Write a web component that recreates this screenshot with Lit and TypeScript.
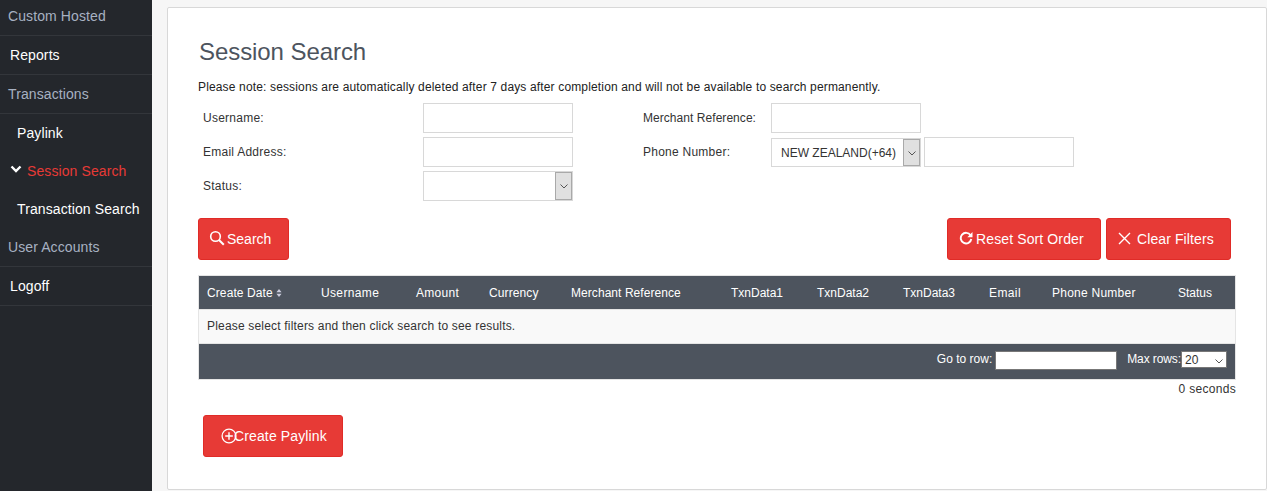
import { LitElement, html, css, svg } from "lit";
import { customElement } from "lit/decorators.js";

const chevron = svg`<path d="M1.5 3.5L5 7l3.5-3.5" fill="none" stroke="#555" stroke-width="1"/>`;

const COLUMNS: [string, number, number][] = [
  ["Create Date", 114, 0.1], ["Username", 95, 0.35], ["Amount", 73, 0.3], ["Currency", 82, 0.1],
  ["Merchant Reference", 160, 0.06], ["TxnData1", 86, 0], ["TxnData2", 86, 0], ["TxnData3", 86, 0],
  ["Email", 63, 0.4], ["Phone Number", 126, 0.25], ["Status", 65, 0],
];

@customElement("app-root")
export class AppRoot extends LitElement {
  static styles = css`
    :host { display: flex; width: 100%; height: 491px; overflow: hidden; background: #f6f6f6;
      font-family: "Liberation Sans", Arial, sans-serif; font-size: 12px; color: #333; }
    * { box-sizing: border-box; }
    .side { width: 152px; flex: none; background: #24272c; font-size: 14px; color: #fff; letter-spacing: 0.1px; }
    .item { height: 39px; display: flex; align-items: center; padding: 0 0 0 10px; border-bottom: 1px solid #33363b; white-space: nowrap; }
    .item.first { height: 36px; padding: 0 0 3px 8px; }
    .item.muted { color: #a7b1c2; padding-left: 8px; }
    .item.sub { height: 38px; border-bottom: 0; padding-left: 17px; }
    .item.sub.active { color: #e73a36; padding-left: 10px; gap: 5px; }
    .item.sub.active svg { margin-top: -5px; }
    .item.accounts { height: 39px; padding-bottom: 1px; }
    main { flex: 1; min-width: 0; padding: 7px 0 1px 15px; display: flex; }
    .card { flex: 1; min-width: 0; background: #fff; border: 1px solid #d8d8d8; border-radius: 2px; padding: 30px 30px 0; }
    h1 { margin: 0 0 0 1px; font-size: 24px; font-weight: 400; line-height: 28px; color: #4d545e; letter-spacing: -0.07px; }
    .note { margin: 14px 0 0; line-height: 14px; font-size: 12px; color: #222; letter-spacing: 0.15px; }
    .form { display: grid; grid-template-columns: 225px 150px 70px 128px auto; grid-auto-rows: 30px; row-gap: 4px; margin-top: 9px; }
    label { display: flex; align-items: center; color: #333; letter-spacing: 0.25px; }
    label.l { padding-left: 5px; }
    label.r { grid-column: 4; }
    label.tight { letter-spacing: 0.05px; }
    input { height: 30px; border: 1px solid #d8d8d8; background: #fff; padding: 0 6px; margin: 0; outline: 0; display: block; }
    .w { width: 150px; }
    .phone { display: flex; gap: 3px; align-items: flex-end; }
    .sel { position: relative; width: 150px; height: 30px; }
    .sel.ph { height: 29px; }
    select { appearance: none; -webkit-appearance: none; display: block; width: 100%; height: 100%; border: 1px solid #d8d8d8;
      background: #fff; border-radius: 0; font: 12px "Liberation Sans", Arial, sans-serif; color: #333; padding: 0 0 0 9px; outline: 0; margin: 0; }
    .arrow { position: absolute; right: 1px; top: 1px; bottom: 1px; width: 17px; background: #e0e0e0; border: 1px solid #a9a9a9;
      display: flex; align-items: center; justify-content: center; pointer-events: none; }
    .actions { display: flex; justify-content: space-between; margin: 17px 5px 0 0; }
    .group { display: flex; gap: 5px; }
    button { height: 42px; border: 1px solid #e02b27; border-radius: 3px; background: #e73a36; color: #fff; font: 14px "Liberation Sans", Arial, sans-serif;
      display: inline-flex; align-items: center; padding: 0 16px 0 10px; margin: 0; white-space: nowrap; }
    button svg { flex: none; margin-top: -2px; }
    .search { width: 91px; gap: 2px; }
    .reset { width: 154px; padding-left: 11px; gap: 3px; letter-spacing: 0.12px; }
    .clear { width: 125px; padding-left: 11px; gap: 6px; letter-spacing: 0.1px; }
    .create { width: 140px; margin: 0 0 0 5px; padding-left: 17px; letter-spacing: 0.13px; }
    .create svg { margin-top: -1px; }
    .create span { margin-left: -3px; }
    .table { margin-top: 15px; border: 1px solid #e5e5e5; }
    .head { display: flex; height: 33px; background: #4d545e; color: #fff; align-items: center; }
    .head div { padding-left: 8px; white-space: nowrap; display: flex; align-items: center; gap: 3px; }
    .msg { height: 35px; background: #f9f9f9; border-top: 1px solid #e5e5e5; border-bottom: 1px solid #e5e5e5; display: flex; align-items: center; padding: 0 0 2px 8px; color: #333; letter-spacing: 0.185px; }
    .foot { height: 35px; background: #4d545e; color: #fff; display: flex; align-items: flex-start; justify-content: flex-end; padding: 7px 8px 0 0; }
    .foot span { line-height: 16px; }
    .foot .max { letter-spacing: -0.1px; }
    .foot input { width: 122px; height: 19px; border: 1px solid #777; margin: 0 10px 0 3px; }
    .mini { position: relative; width: 46px; height: 17px; }
    .mini select { border: 1px solid #777; padding: 0 0 0 3px; }
    .mini svg { position: absolute; right: 3px; top: 5px; pointer-events: none; }
    .time { text-align: right; line-height: 14px; margin-top: 2px; color: #333; letter-spacing: 0.3px; }
    .bottom { margin-top: 19px; }
  `;

  render() {
    return html`
      <nav class="side">
        <div class="item first muted">Custom Hosted</div>
        <div class="item">Reports</div>
        <div class="item muted">Transactions</div>
        <div class="item sub">Paylink</div>
        <div class="item sub active">
          <svg width="12" height="10" viewBox="0 0 12 10"><path d="M1.5 2.5L6 7l4.5-4.5" fill="none" stroke="#fff" stroke-width="2.4"/></svg>
          Session Search
        </div>
        <div class="item sub">Transaction Search</div>
        <div class="item muted accounts">User Accounts</div>
        <div class="item">Logoff</div>
      </nav>
      <main>
        <section class="card">
          <h1>Session Search</h1>
          <p class="note">Please note: sessions are automatically deleted after 7 days after completion and will not be available to search permanently.</p>
          <div class="form">
            <label class="l">Username:</label>
            <input class="w" />
            <label class="r tight">Merchant Reference:</label>
            <input class="w" />
            <label class="l">Email Address:</label>
            <input class="w" />
            <label class="r">Phone Number:</label>
            <div class="phone">
              <div class="sel ph">
                <select><option>NEW ZEALAND(+64)</option></select>
                <span class="arrow"><svg width="10" height="10" viewBox="0 0 10 10">${chevron}</svg></span>
              </div>
              <input class="w" />
            </div>
            <label class="l">Status:</label>
            <div class="sel">
              <select><option></option></select>
              <span class="arrow"><svg width="10" height="10" viewBox="0 0 10 10">${chevron}</svg></span>
            </div>
          </div>
          <div class="actions">
            <button class="search">
              <svg width="16" height="16" viewBox="0 0 16 16"><circle cx="6.5" cy="6.5" r="4.8" fill="none" stroke="#fff" stroke-width="1.6"/><path d="M10 10l4.8 4.8" stroke="#fff" stroke-width="2"/></svg>
              <span>Search</span>
            </button>
            <div class="group">
              <button class="reset">
                <svg width="14" height="14" viewBox="0 0 14 14"><path d="M11.5 4.2A5.3 5.3 0 1 0 12.3 8" fill="none" stroke="#fff" stroke-width="1.9"/><path d="M13.5 1v5.2H8.3z" fill="#fff"/></svg>
                <span>Reset Sort Order</span>
              </button>
              <button class="clear">
                <svg width="13" height="13" viewBox="0 0 13 13"><path d="M1 1l11 11M12 1L1 12" stroke="#fff" stroke-width="1.4"/></svg>
                <span>Clear Filters</span>
              </button>
            </div>
          </div>
          <div class="table">
            <div class="head">
              ${COLUMNS.map(([name, w, track], i) => html`
                <div style="width:${w}px;letter-spacing:${track}px">${name}${i === 0 ? html`<svg width="6" height="10" viewBox="0 0 6 10"><path d="M3 1L5.6 4.2H0.4zM3 9L0.4 5.8h5.2z" fill="#ccd"/></svg>` : ""}</div>`)}
            </div>
            <div class="msg">Please select filters and then click search to see results.</div>
            <div class="foot">
              <span>Go to row:</span><input />
              <span class="max">Max rows:</span>
              <div class="mini">
                <select><option>20</option></select>
                <svg width="10" height="10" viewBox="0 0 10 10">${chevron}</svg>
              </div>
            </div>
          </div>
          <div class="time">0 seconds</div>
          <div class="bottom">
            <button class="create">
              <svg width="16" height="16" viewBox="0 0 16 16"><circle cx="8" cy="8" r="6.9" fill="none" stroke="#fff" stroke-width="1.3"/><path d="M8 4.2v7.6M4.2 8h7.6" stroke="#fff" stroke-width="1.4"/></svg>
              <span>Create Paylink</span>
            </button>
          </div>
        </section>
      </main>
    `;
  }
}
